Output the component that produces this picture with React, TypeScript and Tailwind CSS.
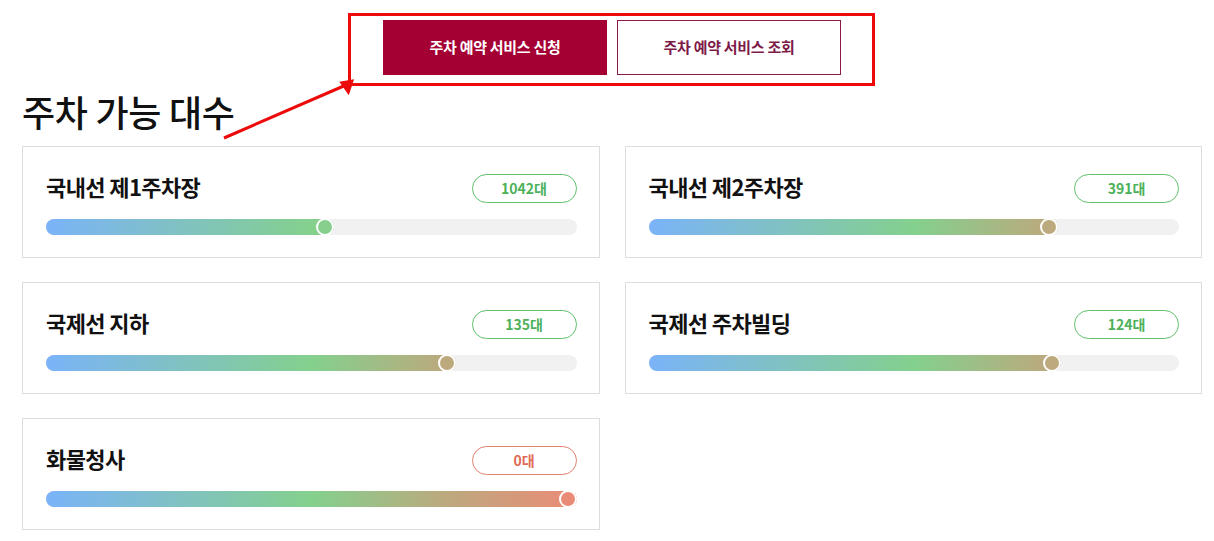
import React from 'react';

type Lot = { name: string; count: string; pct: number; knob: string; tone: 'green' | 'red' };

const LOTS: Lot[] = [
  { name: '국내선 제1주차장', count: '1042대', pct: 54.2, knob: '#86cf8d', tone: 'green' },
  { name: '국내선 제2주차장', count: '391대', pct: 77.2, knob: '#bda97e', tone: 'green' },
  { name: '국제선 지하', count: '135대', pct: 77.2, knob: '#bda97e', tone: 'green' },
  { name: '국제선 주차빌딩', count: '124대', pct: 77.8, knob: '#bda97e', tone: 'green' },
  { name: '화물청사', count: '0대', pct: 100, knob: '#e98b76', tone: 'red' },
];

const LotCard: React.FC<{ lot: Lot }> = ({ lot }) => {
  const badge =
    lot.tone === 'green'
      ? 'border-[#5fbf6c] text-[#4db15b]'
      : 'border-[#e0806e] text-[#e06a55]';
  return (
    <div className="border border-[#dedede] bg-white pl-[23px] pr-[22px] pt-[26px] h-[112px]">
      <div className="flex items-center justify-between h-[30px]">
        <h3 className="text-[22px] font-semibold text-[#111] tracking-[-0.6px] leading-none -mt-[4px]">{lot.name}</h3>
        <span className={`w-[105px] h-[29px] rounded-full border flex items-center justify-center text-[14px] font-bold ${badge}`}>
          {lot.count}
        </span>
      </div>
      <div className="relative mt-[16px] h-[16px] rounded-full bg-[#f1f1f1]">
        <div className="h-full overflow-hidden rounded-full" style={{ width: `${lot.pct}%` }}>
          <div className="h-full w-[532px] bg-[linear-gradient(90deg,#7bb3f8_0%,#84d08d_50%,#bca97e_75%,#ec8b77_100%)]" />
        </div>
        <div
          className="absolute top-[-1px] w-[18px] h-[18px] rounded-full border-[2px] border-white"
          style={{ left: `calc(${lot.pct}% - 18px)`, backgroundColor: lot.knob }}
        />
      </div>
    </div>
  );
};

export default function App() {
  return (
    <div className="relative w-[1214px] h-[541px] bg-white pl-[22px] pr-[12px] pt-[20px] font-['Noto_Sans_CJK_KR','Noto_Sans',sans-serif]">
      <div className="flex justify-center gap-[10px]">
        <button className="w-[224px] h-[55px] bg-[#a50034] text-white text-[15px] font-bold tracking-[-0.3px]">
          주차 예약 서비스 신청
        </button>
        <button className="w-[224px] h-[55px] border border-[#8a1c4a] bg-white text-[#7d1b48] text-[15px] font-bold tracking-[-0.3px]">
          주차 예약 서비스 조회
        </button>
      </div>

      <h2 className="mt-[11px] text-[36px] font-medium text-[#111] leading-[50px] tracking-[-0.3px]">주차 가능 대수</h2>

      <div className="mt-[10px] grid grid-cols-2 gap-x-[25px] gap-y-[24px]">
        {LOTS.map((lot) => (
          <LotCard key={lot.name} lot={lot} />
        ))}
      </div>

      {/* annotation overlay */}
      <div className="absolute left-[348px] top-[13px] w-[527px] h-[73px] border-[3px] border-[#ec0a0a] pointer-events-none" />
      <svg className="absolute left-0 top-0 pointer-events-none" width="1214" height="541">
        <line x1="224" y1="138" x2="346" y2="85" stroke="#ec0a0a" strokeWidth="3" />
        <polygon points="355,80 340,80 347,95" fill="#ec0a0a" transform="rotate(-10 350 85)" />
      </svg>
    </div>
  );
}
